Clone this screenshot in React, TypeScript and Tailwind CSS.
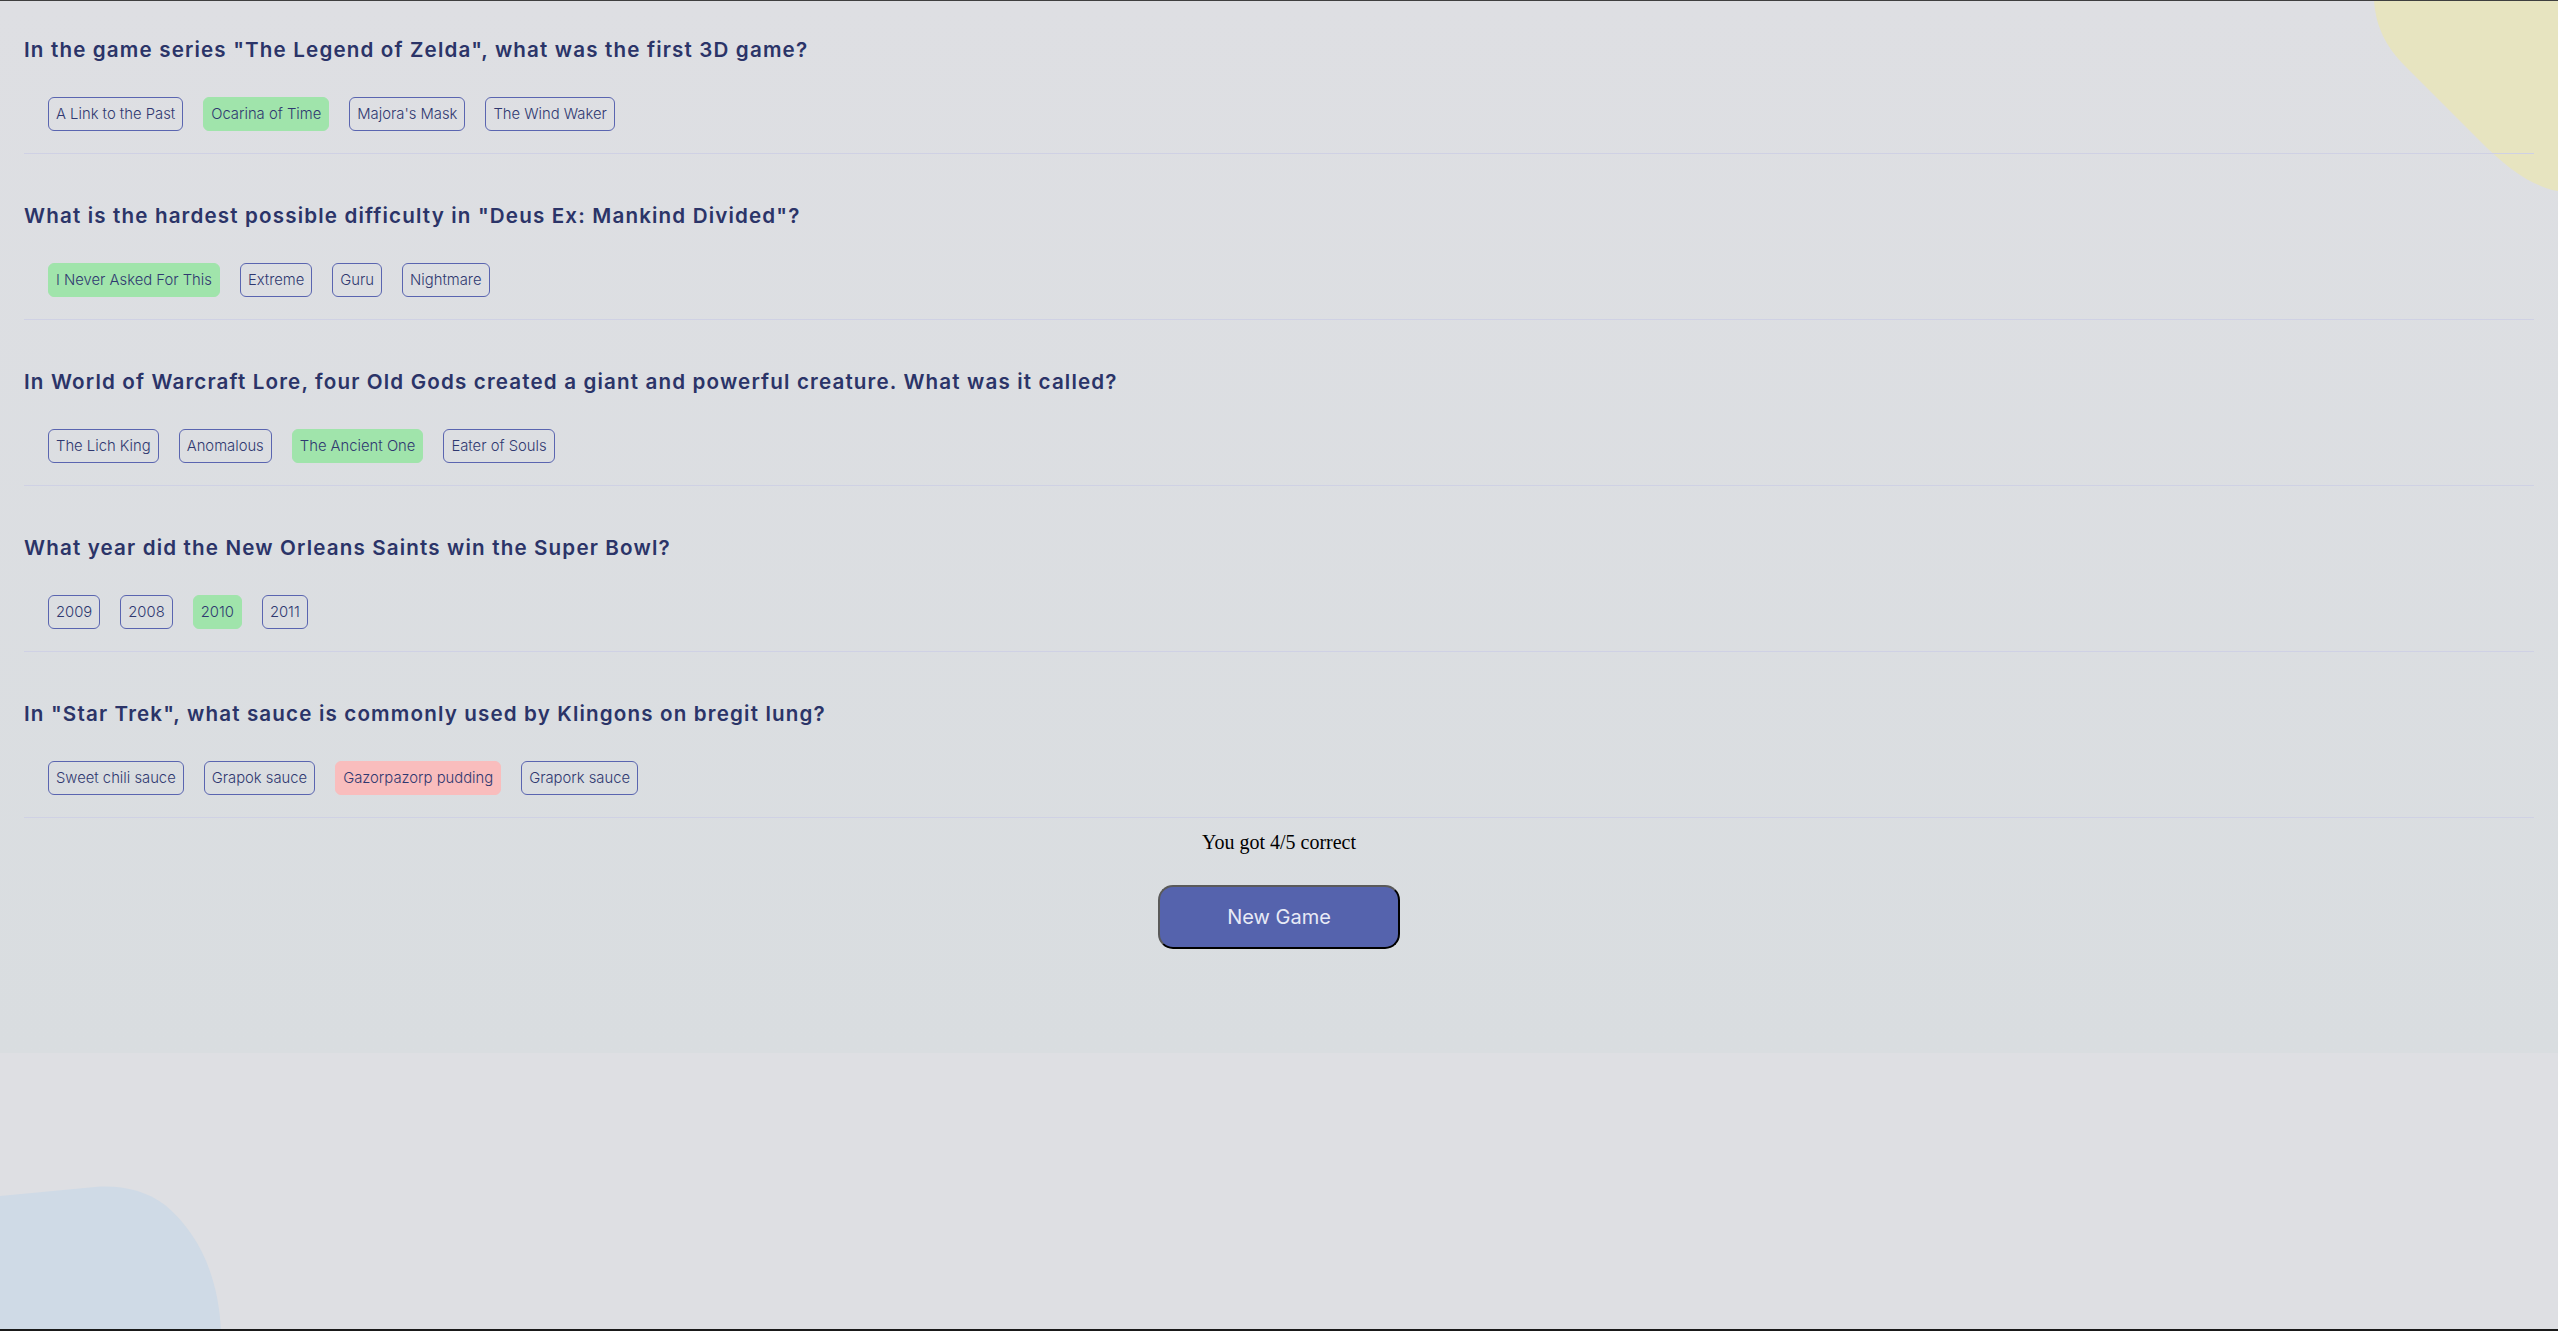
import React from 'react';

type Question = {
    text: string;
    answers: string[];
    correct: number;
    picked: number;
};

const questions: Question[] = [
    {
        text: 'In the game series "The Legend of Zelda", what was the first 3D game?',
        answers: ['A Link to the Past', 'Ocarina of Time', "Majora's Mask", 'The Wind Waker'],
        correct: 1,
        picked: 1,
    },
    {
        text: 'What is the hardest possible difficulty in "Deus Ex: Mankind Divided"?',
        answers: ['I Never Asked For This', 'Extreme', 'Guru', 'Nightmare'],
        correct: 0,
        picked: 0,
    },
    {
        text: 'In World of Warcraft Lore, four Old Gods created a giant and powerful creature. What was it called?',
        answers: ['The Lich King', 'Anomalous', 'The Ancient One', 'Eater of Souls'],
        correct: 2,
        picked: 2,
    },
    {
        text: 'What year did the New Orleans Saints win the Super Bowl?',
        answers: ['2009', '2008', '2010', '2011'],
        correct: 2,
        picked: 2,
    },
    {
        text: 'In "Star Trek", what sauce is commonly used by Klingons on bregit lung?',
        answers: ['Sweet chili sauce', 'Grapok sauce', 'Gazorpazorp pudding', 'Grapork sauce'],
        correct: 1,
        picked: 2,
    },
];

function AnswerButton({ label, state }: { label: string; state: 'correct' | 'wrong' | 'idle' }) {
    const tone =
        state === 'correct'
            ? 'bg-[#a0e4ab] border-[#a0e4ab]'
            : state === 'wrong'
              ? 'bg-[#f9bdbd] border-[#f9bdbd]'
              : 'bg-transparent border-[#5a65b0]';
    return (
        <button
            className={`h-[34px] px-[7px] flex items-center border rounded-[6px] text-[14.8px] text-[#2f3870] font-light ${tone}`}
            style={{ fontFamily: 'Inter, sans-serif' }}
        >
            {label}
        </button>
    );
}

export default function App() {
    return (
        <div className="relative h-screen overflow-hidden bg-[linear-gradient(to_bottom,#dedfe3_0px,#d9dde0_1052px,#dedfe3_1052px)] border-t border-[#3f3f3f]">
            {/* decorative blobs */}
            <svg className="absolute top-0 right-0 w-[188px] h-[192px]" viewBox="0 0 188 192">
                <path d="M4 0 C 6 25, 15 45, 35 65 L 110 140 C 135 165, 160 185, 188 190 L 188 0 Z" fill="#e7e4c0" />
            </svg>
            <svg className="absolute bottom-0 left-0 w-[225px] h-[146px]" viewBox="0 0 225 146">
                <path d="M0 11 L 95 2 C 120 0, 145 5, 165 20 C 195 45, 218 85, 221 146 L 0 146 Z" fill="#cfdae6" />
            </svg>

            <div className="relative px-6 pt-[36px] pb-[104px] flex flex-col">
                <div className="flex flex-col gap-[49px]">
                    {questions.map((q, i) => (
                        <div key={i} className="border-b border-[#cfd1e4] pb-[22px]">
                            <h2
                                className="text-[20.6px] leading-[25px] font-semibold text-[#2b3468] tracking-[1.15px]"
                                style={{ fontFamily: 'Inter, sans-serif' }}
                            >
                                {q.text}
                            </h2>
                            <div className="mt-[35px] ml-6 flex gap-5">
                                {q.answers.map((a, j) => (
                                    <AnswerButton
                                        key={j}
                                        label={a}
                                        state={j !== q.picked ? 'idle' : q.picked === q.correct ? 'correct' : 'wrong'}
                                    />
                                ))}
                            </div>
                        </div>
                    ))}
                </div>

                <p
                    className="mt-[13px] text-center text-[20px] leading-[23px] text-black"
                    style={{ fontFamily: '"Liberation Serif", serif' }}
                >
                    You got 4/5 correct
                </p>
                <div className="mt-[31px] flex justify-center">
                    <button
                        className="w-[242px] h-[64px] rounded-[15px] bg-[#5563ad] border-2 border-t-[#5a5a5a] border-l-[#5a5a5a] border-r-black border-b-black text-[20px] text-[#e8eaf6]"
                        style={{ fontFamily: 'Inter, sans-serif' }}
                    >
                        New Game
                    </button>
                </div>
            </div>

            <div className="absolute bottom-0 left-0 right-0 h-[2px] bg-[#1a1a1a]" />
        </div>
    );
}
